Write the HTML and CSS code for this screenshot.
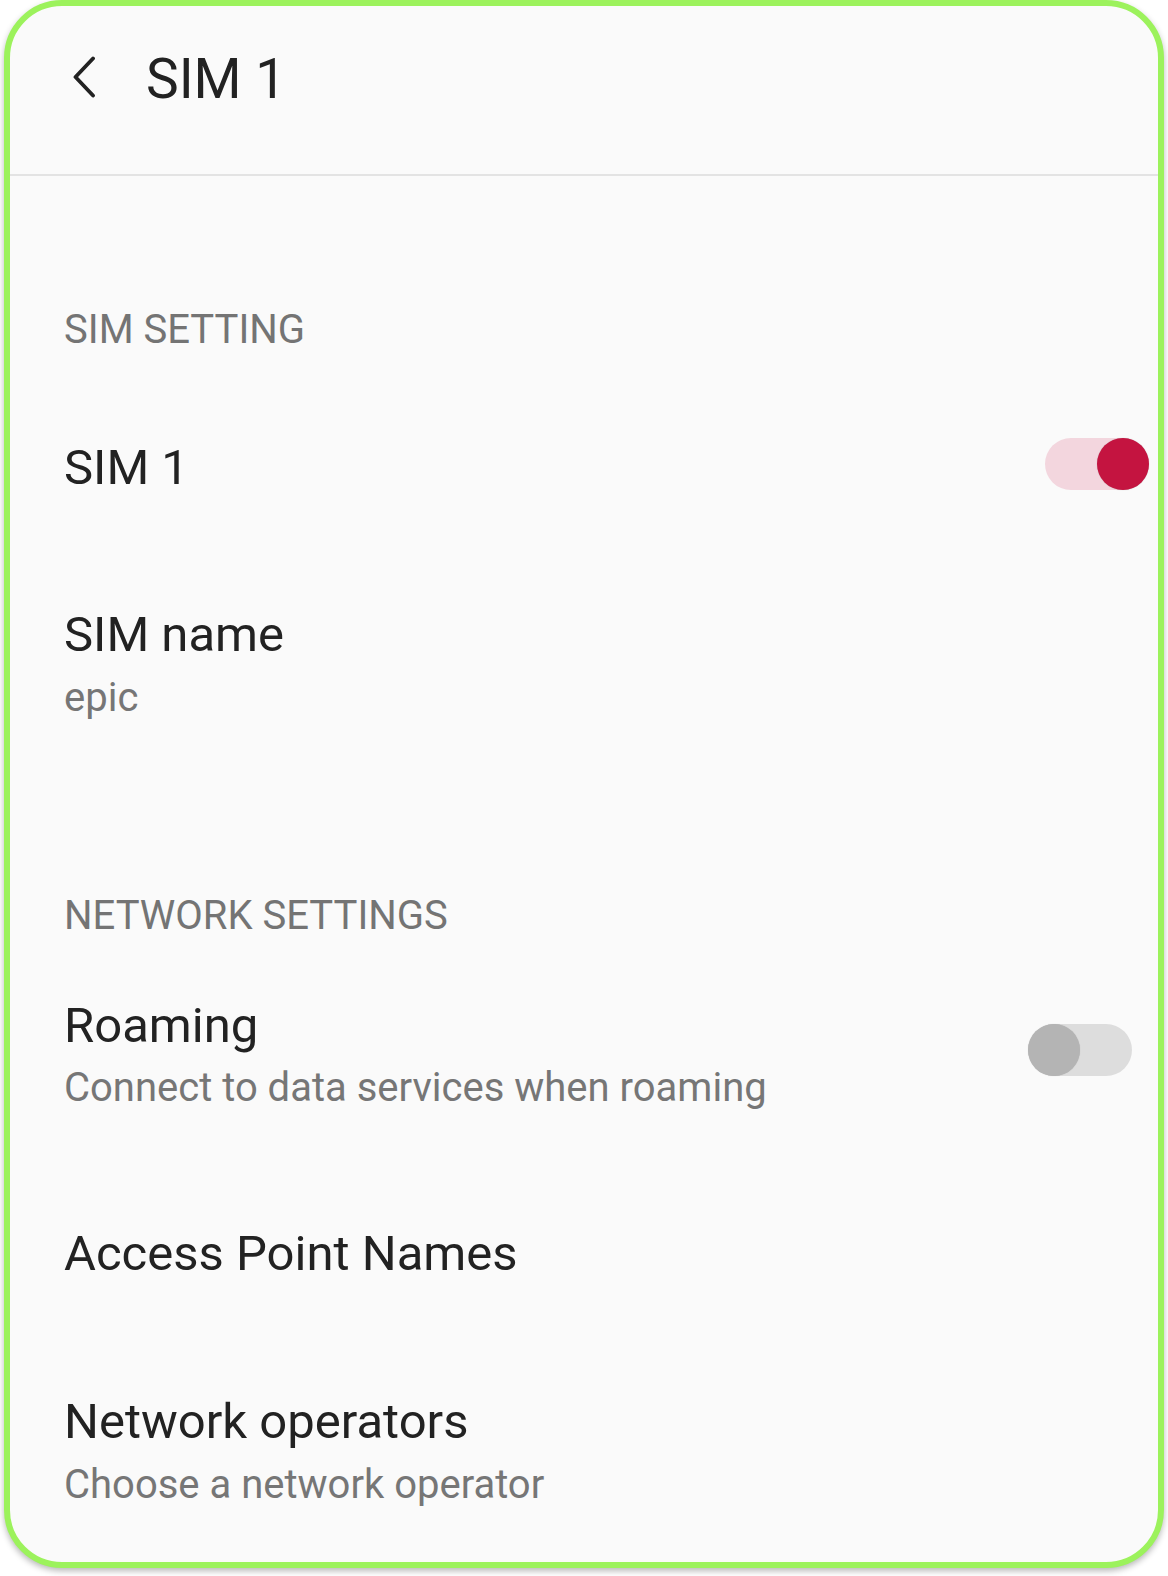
FILE: index.html
```html
<!DOCTYPE html>
<html lang="en">
<head>
<meta charset="utf-8">
<title>SIM 1</title>
<link rel="stylesheet" href="styles.css">
</head>
<body>
<div class="frame">
  <header class="appbar">
    <svg class="back" width="24" height="42" viewBox="0 0 24 42" aria-hidden="true">
      <polyline points="21,2.5 3.5,21 21,39.5" fill="none" stroke="#222" stroke-width="3.8" stroke-linecap="round" stroke-linejoin="round"/>
    </svg>
    <h1 class="title">SIM 1</h1>
  </header>
  <main class="content">
    <div class="section-label">SIM SETTING</div>
    <div class="item single switch-on-row">
      <div class="texts"><div class="primary">SIM 1</div></div>
      <div class="switch on"><span class="knob"></span></div>
    </div>
    <div class="item">
      <div class="texts">
        <div class="primary">SIM name</div>
        <div class="secondary">epic</div>
      </div>
    </div>

    <div class="section-label second">NETWORK SETTINGS</div>
    <div class="item switch-off-row">
      <div class="texts">
        <div class="primary">Roaming</div>
        <div class="secondary sub-wide">Connect to data services when roaming</div>
      </div>
      <div class="switch off"><span class="knob"></span></div>
    </div>
    <div class="item single apn">
      <div class="texts"><div class="primary">Access Point Names</div></div>
    </div>
    <div class="item">
      <div class="texts">
        <div class="primary">Network operators</div>
        <div class="secondary">Choose a network operator</div>
      </div>
    </div>
  </main>
</div>
</body>
</html>
```

FILE: styles.css
```css
* { box-sizing: border-box; }

html, body {
  margin: 0;
  padding: 0;
  background: #ffffff;
}

body {
  font-family: Roboto, "Noto Sans", "Liberation Sans", sans-serif;
  width: 1168px;
  height: 1576px;
  overflow: hidden;
}

.frame {
  margin-left: 4px;
  width: 1160px;
  height: 1568px;
  border: 6px solid #9cf25c;
  border-radius: 58px;
  background: #fafafa;
  box-shadow: 0 3px 6px rgba(0, 0, 0, 0.28);
  overflow: hidden;
}

.appbar {
  display: flex;
  align-items: flex-start;
  height: 170px;
  padding: 45px 0 0 62px;
  border-bottom: 2px solid #e3e3e3;
}

.back {
  display: block;
  margin-top: 5px;
  flex: none;
}

.title {
  margin: 0 0 0 50px;
  font-size: 55px;
  line-height: 56px;
  font-weight: 400;
  color: #222222;
}

.content {
  padding-top: 4px;
}

.section-label {
  margin: 130px 0 22px;
  padding-left: 54px;
  font-size: 40px;
  line-height: 39px;
  color: #747474;
}

.section-label.second {
  margin-top: 132px;
  margin-bottom: 20px;
}

.item {
  display: flex;
  align-items: center;
  justify-content: space-between;
  padding: 47px 0 47px 54px;
}

.item.single {
  padding-top: 67px;
  padding-bottom: 66px;
}

.item.apn {
  padding-top: 76px;
  padding-bottom: 73px;
}

.switch-on-row { padding-right: 9px; }
.switch-off-row { padding-right: 26px; }

.primary {
  font-size: 49px;
  line-height: 48px;
  color: #222222;
}

.secondary {
  margin-top: 20px;
  font-size: 40px;
  line-height: 38px;
  color: #767676;
}

.secondary.sub-wide {
  margin-top: 19px;
}

.switch {
  display: flex;
  width: 104px;
  height: 52px;
  border-radius: 26px;
  margin-bottom: 8px;
  flex: none;
}

.switch-off-row .switch {
  margin-bottom: 10px;
}

.switch.on {
  justify-content: flex-end;
  background: #f3d6de;
}

.switch.off {
  justify-content: flex-start;
  background: #dddddd;
}

.knob {
  width: 52px;
  height: 52px;
  border-radius: 50%;
}

.switch.on .knob {
  background: #c41440;
  box-shadow: 0 0 1px rgba(0, 0, 0, 0.25);
}

.switch.off .knob {
  background: #b4b4b4;
  box-shadow: 0 0 1px rgba(0, 0, 0, 0.2);
}
```
